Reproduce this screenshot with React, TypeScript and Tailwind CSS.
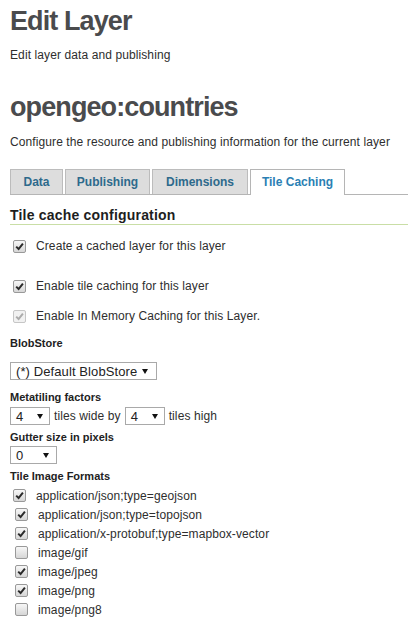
import React from "react"

function Check({ checked, disabled }: { checked: boolean; disabled?: boolean }) {
  return (
    <span
      className={`inline-flex h-[13px] w-[13px] shrink-0 items-center justify-center rounded-[2px] border ${
        disabled ? "border-[#c6c6c6] bg-[#f1f1f1]" : "border-[#999999] bg-gradient-to-b from-[#f7f7f7] to-[#d6d6d6]"
      }`}
    >
      {checked && (
        <svg width="9" height="9" viewBox="0 0 9 9">
          <path d="M1.2 4.6 L3.6 7 L7.9 1.6" fill="none" stroke={disabled ? "#ababab" : "#2a2a2a"} strokeWidth="2" />
        </svg>
      )}
    </span>
  )
}

function Arrow() {
  return (
    <svg width="6" height="5" viewBox="0 0 6 5" className="shrink-0">
      <polygon points="0,0 6,0 3,5" fill="#111" />
    </svg>
  )
}

function Select({ value, width, pr }: { value: string; width: string; pr: string }) {
  return (
    <span
      className={`inline-flex h-[18px] items-center justify-between border border-[#a9a9a9] bg-white pl-[5px] text-[13px] leading-none text-[#222] ${width} ${pr}`}
    >
      <span>{value}</span>
      <Arrow />
    </span>
  )
}

const tabs = [
  { name: "Data", w: "w-[53px]" },
  { name: "Publishing", w: "w-[85px]" },
  { name: "Dimensions", w: "w-[96px]" },
]

const formats = [
  { name: "application/json;type=geojson", checked: true },
  { name: "application/json;type=topojson", checked: true },
  { name: "application/x-protobuf;type=mapbox-vector", checked: true },
  { name: "image/gif", checked: false },
  { name: "image/jpeg", checked: true },
  { name: "image/png", checked: true },
  { name: "image/png8", checked: false },
]

export default function App() {
  return (
    <div className="min-h-[632px] w-[408px] bg-white pl-[10px] pt-[5px] font-['Liberation_Sans',Arial,Helvetica,sans-serif] text-[12px] tracking-[0.1px] text-[#2e2e2e]">
      <h1 className="text-[27px] font-bold leading-[32px] tracking-[-0.9px] text-[#4a4b4d]">Edit Layer</h1>
      <p className="mt-[10px] leading-[16px]">Edit layer data and publishing</p>

      <h2 className="mt-[28px] text-[27px] font-bold leading-[32px] tracking-[-0.9px] text-[#4a4b4d]">opengeo:countries</h2>
      <p className="mt-[11px] leading-[16px]">Configure the resource and publishing information for the current layer</p>

      {/* tabs */}
      <div className="mt-[19px] flex h-[26px] items-end gap-[2px] border-b border-[#b5b5b5]">
        {tabs.map((t) => (
          <div
            key={t.name}
            className={`flex h-[25px] items-center justify-center border border-b-0 border-[#bcbcbc] bg-[#dddddd] font-bold leading-[16px] tracking-normal text-[#2d6a8c] ${t.w}`}
          >
            {t.name}
          </div>
        ))}
        <div className="-mb-px flex h-[26px] w-[95px] items-center justify-center border border-b-0 border-[#b5b5b5] bg-white pb-px font-bold leading-[16px] tracking-normal text-[#2b7fb4]">
          Tile Caching
        </div>
      </div>

      <h3 className="mt-[11px] border-b border-[#c9dea6] text-[14px] font-bold leading-[18px] tracking-[0.2px] text-[#1e1e1e]">
        Tile cache configuration
      </h3>

      <div className="mt-[13px] flex h-[16px] items-center gap-[10px] pl-[3px] leading-[16px]">
        <Check checked />
        <span>Create a cached layer for this layer</span>
      </div>
      <div className="mt-[24px] flex h-[16px] items-center gap-[10px] pl-[3px] leading-[16px]">
        <Check checked />
        <span>Enable tile caching for this layer</span>
      </div>
      <div className="mt-[14px] flex h-[16px] items-center gap-[10px] pl-[3px] leading-[16px]">
        <Check checked disabled />
        <span>Enable In Memory Caching for this Layer.</span>
      </div>

      <div className="mt-[12px] text-[11px] font-bold leading-[14px] tracking-normal text-[#222]">BlobStore</div>
      <div className="mt-[12px] flex">
        <Select value="(*) Default BlobStore" width="w-[147px]" pr="pr-[8px]" />
      </div>

      <div className="mt-[10px] text-[11px] font-bold leading-[14px] tracking-normal text-[#222]">Metatiling factors</div>
      <div className="mt-[3px] flex items-center">
        <Select value="4" width="w-[40px]" pr="pr-[6px]" />
        <span className="mx-[4px]">tiles wide by</span>
        <Select value="4" width="w-[40px]" pr="pr-[6px]" />
        <span className="ml-[4px]">tiles high</span>
      </div>

      <div className="mt-[5px] text-[11px] font-bold leading-[14px] tracking-normal text-[#222]">Gutter size in pixels</div>
      <div className="mt-[2px] flex">
        <Select value="0" width="w-[47px]" pr="pr-[7px]" />
      </div>

      <div className="mt-[5px] text-[11px] font-bold leading-[14px] tracking-normal text-[#222]">Tile Image Formats</div>
      <div className="mt-[3px] flex flex-col">
        {formats.map((f, i) => (
          <div
            key={f.name}
            className={`flex h-[19px] items-center ${i === 0 ? "gap-[10px] pl-[3px]" : "gap-[10px] pl-[5px]"}`}
          >
            <Check checked={f.checked} />
            <span>{f.name}</span>
          </div>
        ))}
      </div>
    </div>
  )
}
